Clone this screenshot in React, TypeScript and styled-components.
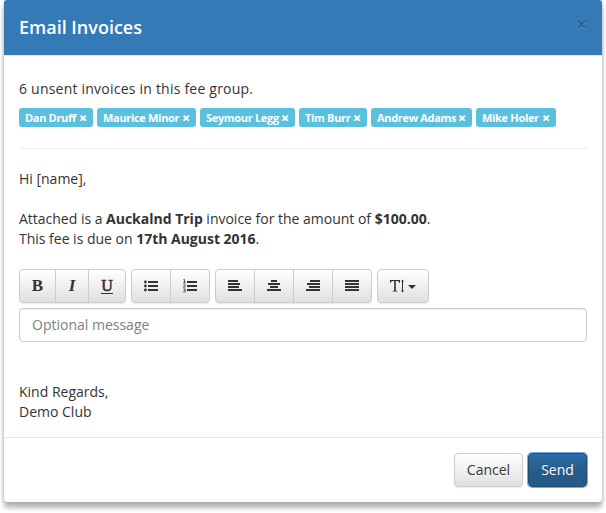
import React from 'react';
import styled, { createGlobalStyle, css } from 'styled-components';

const GlobalStyle = createGlobalStyle`
  * { box-sizing: border-box; }
  body {
    margin: 0;
    min-height: 513px;
    background: #fff;
    color: #333;
    font: 14px/20px 'Open Sans', sans-serif;
  }
  button, input { font-family: inherit; }
`;

const Page = styled.div`
  height: 513px;
  padding-left: 4px;
  overflow: hidden;
`;

const Dialog = styled.section`
  width: 598px;
  height: 502px;
  display: flex;
  flex-direction: column;
  background: #fff;
  border-radius: 3px 3px 4px 4px;
  box-shadow: 0 6px 5px rgba(0, 0, 0, 0.28), 0 0 4px rgba(0, 0, 0, 0.18);
`;

const Header = styled.header`
  flex: none;
  height: 56px;
  padding: 0 15px;
  display: flex;
  justify-content: space-between;
  background: #337ab7;
  border-bottom: 1px solid #e5e5e5;
  border-radius: 3px 3px 0 0;
`;

const Title = styled.h4`
  margin: 15px 0 0;
  color: #fff;
  font-size: 18px;
  line-height: 25px;
  font-weight: 600;
`;

const CloseButton = styled.button`
  width: 12px;
  height: 12px;
  margin-top: 18px;
  padding: 0;
  border: 0;
  background: none;
  display: flex;
  align-items: center;
  justify-content: center;
  svg { filter: drop-shadow(0 1px 0 rgba(255, 255, 255, 0.2)); }
`;

const Body = styled.main`
  flex: 1;
  padding: 23px 15px 0;
`;

const Summary = styled.p`
  margin: 0;
  font-weight: 500;
  letter-spacing: 0.22px;
`;

const Tags = styled.div`
  display: flex;
  gap: 4px;
  margin-top: 9px;
`;

const Tag = styled.span<{ $width: number }>`
  width: ${(p) => p.$width}px;
  height: 19px;
  padding: 0 6.5px 0 6px;
  display: flex;
  align-items: center;
  justify-content: space-between;
  white-space: nowrap;
  background: #5bc0de;
  border-radius: 3px;
  color: #fff;
  font-size: 11px;
  line-height: 19px;
  font-weight: 700;
  letter-spacing: -0.32px;
  svg { flex: none; margin-top: 1px; }
`;

const Divider = styled.hr`
  margin: 21px 0 20px;
  border: 0;
  border-top: 1px solid #eee;
`;

const Paragraph = styled.p`
  margin: 0 0 20px;
  letter-spacing: -0.01px;
`;

const Toolbar = styled.div`
  display: flex;
  gap: 5px;
`;

const Group = styled.div`
  display: flex;
`;

const raised = css`
  border: 1px solid #ccc;
  background: linear-gradient(#fff, #e0e0e0);
  box-shadow: inset 0 1px 0 rgba(255, 255, 255, 0.15), 0 1px 1px rgba(0, 0, 0, 0.075);
`;

const Tool = styled.button<{ $width: number }>`
  ${raised}
  width: ${(p) => p.$width}px;
  height: 34px;
  padding: 0;
  display: flex;
  align-items: center;
  justify-content: center;
  color: #333;
  &:not(:first-child) { margin-left: -1px; }
  &:first-child { border-top-left-radius: 4px; border-bottom-left-radius: 4px; }
  &:last-child { border-top-right-radius: 4px; border-bottom-right-radius: 4px; }
`;

const Letter = styled.span<{ $italic?: boolean; $underline?: boolean }>`
  font: bold 17px/18px 'Liberation Serif', serif;
  font-style: ${(p) => (p.$italic ? 'italic' : 'normal')};
  height: 19px;
  ${(p) => p.$underline && css`
    font-size: 16px;
    font-weight: 400;
    -webkit-text-stroke: 0.6px #333;
    height: 15px;
    line-height: 13px;
    border-bottom: 1px solid #333;
  `}
`;

const Message = styled.input`
  width: 100%;
  height: 34px;
  margin-top: 5px;
  padding: 5px 12px 7px;
  display: block;
  border: 1px solid #ccc;
  border-radius: 4px;
  box-shadow: inset 0 1px 1px rgba(0, 0, 0, 0.075);
  font-size: 14px;
  line-height: 20px;
  &::placeholder { color: #808080; opacity: 1; }
`;

const Signature = styled.p`
  margin: 40px 0 0;
`;

const Footer = styled.footer`
  flex: none;
  height: 65px;
  padding: 15px 15px 0;
  display: flex;
  justify-content: flex-end;
  gap: 5px;
  border-top: 1px solid #e5e5e5;
`;

const Action = styled.button<{ $primary?: boolean }>`
  ${raised}
  width: 69px;
  height: 34px;
  padding: 0;
  border-radius: 4px;
  color: #333;
  font-size: 14px;
  line-height: 20px;
  text-shadow: 0 1px 0 #fff;
  ${(p) => p.$primary && css`
    width: 59px;
    color: #fff;
    border-color: #204d74;
    background: linear-gradient(#2d6ca2, #265a88 60%);
    text-shadow: 0 -1px 0 rgba(0, 0, 0, 0.2);
    box-shadow: 0 0 0 1px #78a9f0;
    font-weight: 500;
  `}
`;

const Cross = ({ size, color, weight }: { size: number; color: string; weight: number }) => (
  <svg width={size} height={size} viewBox="0 0 6 6" stroke={color} strokeWidth={weight}>
    <path d="M.6.6 5.4 5.4M5.4.6.6 5.4" />
  </svg>
);

const Lines = ({ rows }: { rows: [number, number][] }) => (
  <svg width="14" height="12" viewBox="0 0 14 12" fill="#333">
    {rows.map(([x, w], i) => (
      <rect key={i} x={x} y={i * 3} width={w} height="2" />
    ))}
  </svg>
);

const BulletIcon = () => (
  <svg width="14" height="12" viewBox="0 0 14 12" fill="#333">
    {[1, 5, 9].map((y) => (
      <g key={y}>
        <circle cx="1.4" cy={y + 1} r="1.4" />
        <rect x="4" y={y} width="10" height="2" />
      </g>
    ))}
  </svg>
);

const NumberIcon = () => (
  <svg width="14" height="14" viewBox="0 0 14 14" fill="#333">
    {[2, 6, 10].map((y) => (
      <rect key={y} x="4" y={y} width="10" height="2" />
    ))}
    <path
      d="M.3.8 1.5.4V3.5M.3 3.5h2.4M.3 5.4q2-1 2 .3 0 .7-2 2.3h2.3M.3 10h2L1.4 11.3q1.2 0 1.2 1T.2 13"
      fill="none"
      stroke="#444"
      strokeWidth=".9"
    />
  </svg>
);

const TextHeightIcon = () => (
  <svg width="26" height="16" viewBox="0 0 26 16" fill="#333">
    <path d="M0 2h10v3h-.6Q9 3 7.5 3H5.8v9q0 1 1.7 1v.6h-5V13q1.7 0 1.7-1V3H2.5Q1 3 .6 5H0z" />
    <path d="M12.5 1.5 14 3.5H13v9h1l-1.5 2-1.5-2h1v-9h-1z" />
    <path d="M18 7h8l-4 4z" />
  </svg>
);

const tags = [
  { name: 'Dan Druff', width: 74 },
  { name: 'Maurice Minor', width: 99 },
  { name: 'Seymour Legg', width: 95 },
  { name: 'Tim Burr', width: 68 },
  { name: 'Andrew Adams', width: 101 },
  { name: 'Mike Holer', width: 80 },
];

const alignments: [number, number][][] = [
  [[0, 10], [0, 12], [0, 11], [0, 14]],
  [[4, 6], [1, 12], [3, 8], [0, 14]],
  [[4, 10], [1, 13], [3, 11], [0, 14]],
  [[0, 14], [0, 14], [0, 14], [0, 14]],
];

export default function App() {
  return (
    <Page>
      <GlobalStyle />
      <Dialog>
        <Header>
          <Title>Email Invoices</Title>
          <CloseButton aria-label="Close"><Cross size={9} color="#285f8f" weight={1.3} /></CloseButton>
        </Header>
        <Body>
          <Summary>6 unsent invoices in this fee group.</Summary>
          <Tags>
            {tags.map((t) => (
              <Tag key={t.name} $width={t.width}>{t.name}<Cross size={6.5} color="#fff" weight={1.8} /></Tag>
            ))}
          </Tags>
          <Divider />
          <Paragraph>Hi [name],</Paragraph>
          <Paragraph>
            Attached is a <b>Auckalnd Trip</b> invoice for the amount of <b>$100.00</b>.<br />
            This fee is due on <b>17th August 2016</b>.
          </Paragraph>
          <Toolbar>
            <Group>
              <Tool $width={37}><Letter>B</Letter></Tool>
              <Tool $width={34}><Letter $italic>I</Letter></Tool>
              <Tool $width={38}><Letter $underline>U</Letter></Tool>
            </Group>
            <Group>
              <Tool $width={40}><BulletIcon /></Tool>
              <Tool $width={40}><NumberIcon /></Tool>
            </Group>
            <Group>
              {alignments.map((rows, i) => (
                <Tool key={i} $width={40}><Lines rows={rows} /></Tool>
              ))}
            </Group>
            <Group>
              <Tool $width={52}><TextHeightIcon /></Tool>
            </Group>
          </Toolbar>
          <Message placeholder="Optional message" />
          <Signature>Kind Regards,<br />Demo Club</Signature>
        </Body>
        <Footer>
          <Action>Cancel</Action>
          <Action $primary>Send</Action>
        </Footer>
      </Dialog>
    </Page>
  );
}
